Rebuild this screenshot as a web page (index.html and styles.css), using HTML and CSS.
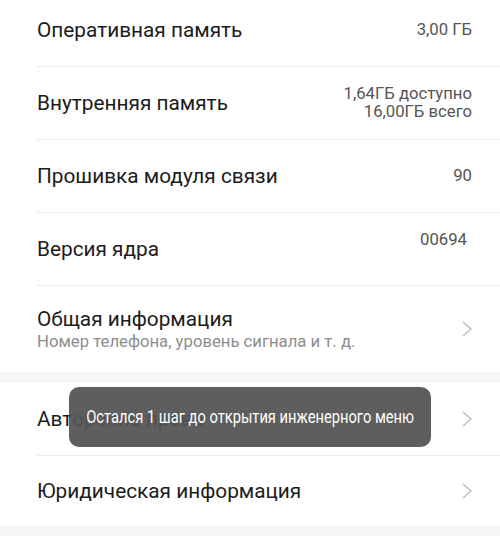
FILE: index.html
```html
<!DOCTYPE html>
<html lang="ru">
<head>
<meta charset="utf-8">
<link rel="stylesheet" href="styles.css">
</head>
<body>
<div class="screen">
  <div class="group first">
    <div class="row">
      <div class="title">Оперативная память</div>
      <div class="value">3,00 ГБ</div>
    </div>
    <div class="row">
      <div class="title">Внутренняя память</div>
      <div class="value">1,64ГБ доступно<br>16,00ГБ всего</div>
    </div>
    <div class="row">
      <div class="title">Прошивка модуля связи</div>
      <div class="value">90</div>
    </div>
    <div class="row">
      <div class="title">Версия ядра</div>
      <div class="value raised">00694</div>
    </div>
    <div class="row tall last">
      <div class="text">
        <div class="title">Общая информация</div>
        <div class="sub">Номер телефона, уровень сигнала и т. д.</div>
      </div>
      <svg class="chev" width="10" height="16" viewBox="0 0 10 16"><polyline points="1,1 9,8 1,15" fill="none" stroke="#b8b8b8" stroke-width="1.3"/></svg>
    </div>
  </div>
  <div class="gap"></div>
  <div class="group">
    <div class="row">
      <div class="title">Авторские права</div>
      <svg class="chev" width="10" height="16" viewBox="0 0 10 16"><polyline points="1,1 9,8 1,15" fill="none" stroke="#b8b8b8" stroke-width="1.3"/></svg>
    </div>
    <div class="row last short">
      <div class="title">Юридическая информация</div>
      <svg class="chev" width="10" height="16" viewBox="0 0 10 16"><polyline points="1,1 9,8 1,15" fill="none" stroke="#b8b8b8" stroke-width="1.3"/></svg>
    </div>
  </div>
  <div class="gap bottom"></div>
  <div class="toast"><span class="toast-text">Остался 1 шаг до открытия инженерного меню</span></div>
</div>
</body>
</html>
```
FILE: styles.css
```css
html, body {
  margin: 0;
  padding: 0;
  background: #ffffff;
}
body {
  width: 500px;
  height: 536px;
  overflow: hidden;
  font-family: Roboto, "Noto Sans", sans-serif;
}
.screen {
  position: relative;
  width: 500px;
  height: 536px;
  overflow: hidden;
}
.group {
  background: #ffffff;
}
.group.first {
  margin-top: -6px;
}
.row {
  display: flex;
  align-items: center;
  justify-content: space-between;
  height: 72px;
  margin-left: 37px;
  padding-right: 28px;
  border-bottom: 1px solid #ececec;
}
.row.tall {
  height: 86px;
}
.row.short {
  height: 70px;
}
.row.last {
  border-bottom: none;
}
.title {
  font-size: 20.8px;
  color: #1c1c1c;
  line-height: 24px;
}
.sub {
  font-size: 16.7px;
  color: #8e8e8e;
  line-height: 20px;
  margin-top: 1px;
}
.value {
  font-size: 16.7px;
  color: #555555;
  line-height: 18px;
  text-align: right;
}
.value.raised {
  margin-bottom: 18px;
  margin-right: 5px;
}
.chev {
  display: block;
  flex: none;
}
.gap {
  height: 11px;
  background: #f6f6f6;
  border-top: 1px solid #f0f0f0;
  box-sizing: border-box;
}
.gap.bottom {
  height: 20px;
}
.toast {
  position: absolute;
  left: 69px;
  top: 387px;
  width: 362px;
  height: 60px;
  border-radius: 10px;
  background: rgba(84, 84, 84, 0.94);
  display: flex;
  align-items: center;
  justify-content: center;
}
.toast-text {
  display: block;
  color: #ffffff;
  font-size: 17.5px;
  white-space: nowrap;
  transform: scaleX(0.84);
}
```
